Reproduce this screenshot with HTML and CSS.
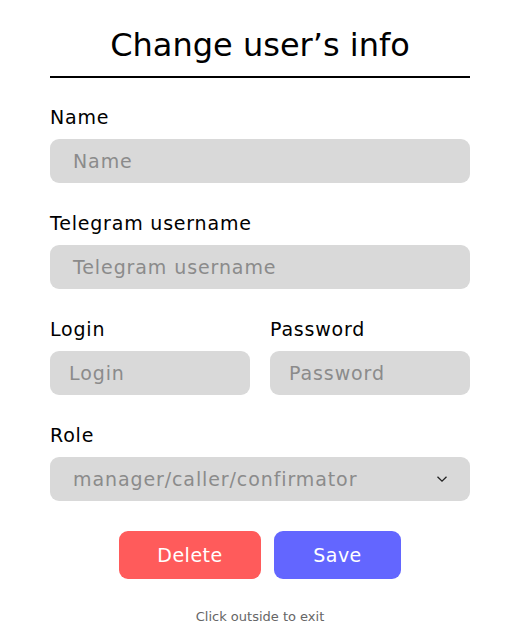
FILE: index.html
```html
<!DOCTYPE html>
<html lang="en">
<head>
<meta charset="utf-8">
<link rel="stylesheet" href="styles.css">
</head>
<body>
<div class="modal">
  <h1 class="title">Change user’s info</h1>
  <div class="form">
    <div class="field">
      <label class="label">Name</label>
      <div class="input"><span class="ph">Name</span></div>
    </div>
    <div class="field">
      <label class="label">Telegram username</label>
      <div class="input"><span class="ph">Telegram username</span></div>
    </div>
    <div class="row">
      <div class="field">
        <label class="label">Login</label>
        <div class="input small"><span class="ph">Login</span></div>
      </div>
      <div class="field">
        <label class="label">Password</label>
        <div class="input small"><span class="ph">Password</span></div>
      </div>
    </div>
    <div class="field">
      <label class="label">Role</label>
      <div class="input select"><span class="ph">manager/caller/confirmator</span>
        <svg class="chev" width="12" height="8" viewBox="0 0 12 8"><path d="M1.5 1.8 6 6.2 10.5 1.8" fill="none" stroke="#222" stroke-width="1.3"/></svg>
      </div>
    </div>
  </div>
  <div class="actions">
    <button class="btn delete">Delete</button>
    <button class="btn save">Save</button>
  </div>
  <p class="hint">Click outside to exit</p>
</div>
</body>
</html>
```
FILE: styles.css
```css
* { box-sizing: border-box; }
body {
  margin: 0;
  background: #fff;
  font-family: "DejaVu Sans", "Open Sans", sans-serif;
  color: #000;
}
.modal {
  width: 420px;
  margin: 0 auto;
  padding-top: 24px;
  display: flex;
  flex-direction: column;
}
.title {
  margin: 0;
  font-weight: 400;
  font-size: 32px;
  line-height: 42px;
  text-align: center;
  padding-bottom: 10px;
  border-bottom: 2px solid #000;
}
.form {
  margin-top: 26px;
  display: flex;
  flex-direction: column;
  gap: 27px;
}
.field {
  display: flex;
  flex-direction: column;
  gap: 8px;
}
.label {
  font-size: 19px;
  letter-spacing: 0.8px;
  line-height: 27px;
}
.input {
  height: 44px;
  background: #d9d9d9;
  border-radius: 9px;
  display: flex;
  align-items: center;
  padding: 0 23px;
}
.input.small { padding: 0 19px; }
.ph {
  color: #8b8b8b;
  font-size: 19px;
  letter-spacing: 0.9px;
}
.row {
  display: grid;
  grid-template-columns: 1fr 1fr;
  gap: 20px;
}
.select { justify-content: space-between; padding-right: 22px; }
.chev { display: block; }
.actions {
  margin-top: 30px;
  display: flex;
  justify-content: center;
  gap: 13px;
}
.btn {
  height: 48px;
  border: 0;
  border-radius: 9px;
  color: #fff;
  font-family: inherit;
  font-size: 19px;
  letter-spacing: 0.5px;
}
.delete { width: 142px; background: #ff5b5b; }
.save { width: 127px; background: #6366ff; }
.hint {
  margin: 30px 0 0;
  text-align: center;
  font-size: 13px;
  color: #666;
}
```
